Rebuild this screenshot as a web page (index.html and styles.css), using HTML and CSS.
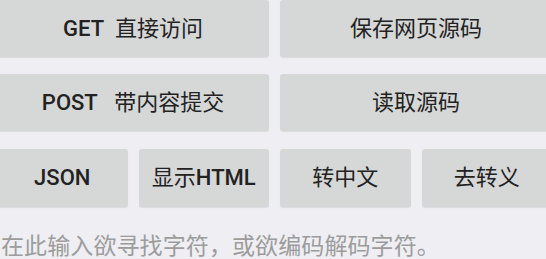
FILE: index.html
```html
<!DOCTYPE html>
<html lang="zh-CN">
<head>
<meta charset="utf-8">
<title>源码工具</title>
<link rel="stylesheet" href="styles.css">
</head>
<body>
<div class="panel">
  <div class="row row-top">
    <button class="btn"><span class="label"><span class="lat">GET</span>  直接访问</span></button>
    <button class="btn"><span class="label">保存网页源码</span></button>
  </div>
  <div class="row row-mid">
    <button class="btn"><span class="label"><span class="lat">POST</span>   带内容提交</span></button>
    <button class="btn"><span class="label">读取源码</span></button>
  </div>
  <div class="row row-bot">
    <button class="btn"><span class="label"><span class="lat">JSON</span></span></button>
    <button class="btn"><span class="label">显示<span class="lat">HTML</span></span></button>
    <button class="btn"><span class="label">转中文</span></button>
    <button class="btn"><span class="label">去转义</span></button>
  </div>
  <div class="input">在此输入欲寻找字符，或欲编码解码字符。</div>
</div>
</body>
</html>
```

FILE: styles.css
```css
html, body {
  margin: 0;
  padding: 0;
  background: #eeeef3;
  overflow: hidden;
}

body {
  width: 546px;
  height: 259px;
  font-family: Roboto, "Noto Sans CJK SC", sans-serif;
}

.panel {
  margin-left: -3px;
  width: 555px;
  display: flex;
  flex-direction: column;
}

.row {
  display: flex;
  gap: 11px;
}

.row-top {
  height: 57px;
}

.row-mid {
  height: 57px;
  margin-top: 17px;
}

.row-bot {
  height: 58px;
  margin-top: 18px;
}

.btn {
  flex: 1 1 0;
  min-width: 0;
  border: none;
  border-radius: 3px;
  background: #d6d7d7;
  box-shadow: 0 1px 1px rgba(0, 0, 0, 0.08);
  color: #222222;
  font-family: Roboto, "Noto Sans CJK SC", sans-serif;
  font-size: 22px;
  font-weight: 400;
  padding: 0;
  margin: 0;
  display: flex;
  align-items: center;
  justify-content: center;
}

.label {
  display: block;
  white-space: pre;
  line-height: 28px;
}

.lat {
  font-weight: 500;
}

.input {
  align-self: flex-start;
  margin-top: 25px;
  margin-left: 4px;
  font-family: "Noto Sans CJK SC", sans-serif;
  font-size: 23px;
  line-height: 24px;
  letter-spacing: 0.1px;
  color: #9c9c9c;
  white-space: nowrap;
}
```
